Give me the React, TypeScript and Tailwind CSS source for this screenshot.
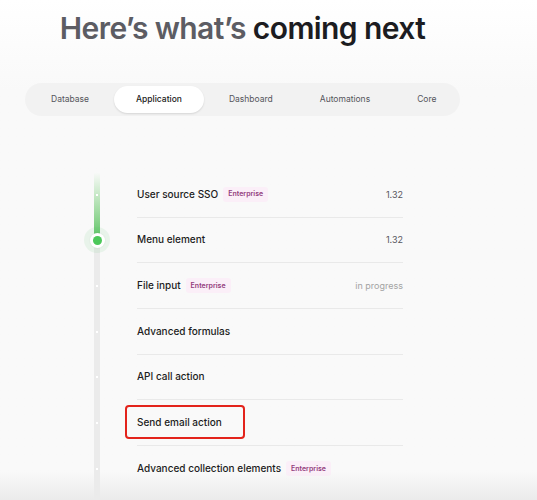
import React from "react";

type Item = {
  name: string;
  enterprise?: boolean;
  value?: string;
  muted?: boolean;
  highlight?: boolean;
};

const tabs = ["Database", "Application", "Dashboard", "Automations", "Core"];

const items: Item[] = [
  { name: "User source SSO", enterprise: true, value: "1.32" },
  { name: "Menu element", value: "1.32" },
  { name: "File input", enterprise: true, value: "in progress", muted: true },
  { name: "Advanced formulas" },
  { name: "API call action" },
  { name: "Send email action", highlight: true },
  { name: "Advanced collection elements", enterprise: true },
];

const Badge = () => (
  <span className="ml-[5px] rounded-[3px] bg-[#fbeff8] px-[5px] py-[3.5px] text-[7px] font-semibold leading-[8px] text-[#933d7d]">
    Enterprise
  </span>
);

export default function App() {
  return (
    <div
      className="relative h-[500px] w-[537px] overflow-hidden bg-gradient-to-b from-white to-[#f9f9f9] to-[90px]"
      style={{ fontFamily: "Inter, 'Noto Sans', sans-serif" }}
    >
      <div className="ml-[25px] w-[435px]">
        <h1 className="pt-[8px] text-center text-[30px] font-semibold leading-[40px] tracking-[-0.02em]">
          <span className="text-[#5c5c63]">Here’s what’s </span>
          <span className="text-[#1c1c21]">coming next</span>
        </h1>

        {/* tabs */}
        <div className="mt-[35px] flex h-[33px] items-center gap-[3px] rounded-full bg-[#f2f2f2] px-[4px]">
          {tabs.map((t) =>
            t === "Application" ? (
              <div
                key={t}
                className="flex h-[27px] items-center rounded-full bg-white px-[22px] text-[8.5px] font-medium text-[#1c1c21] shadow-[0_1px_2px_rgba(0,0,0,0.12)]"
              >
                {t}
              </div>
            ) : (
              <div key={t} className="flex h-[27px] items-center px-[22px] text-[8.5px] text-[#55555c]">
                {t}
              </div>
            )
          )}
        </div>
      </div>

      {/* timeline */}
      <div className="mt-[56px] flex pl-[94px]">
        <div className="relative w-[6px]">
          <div className="absolute left-0 top-0 h-[330px] w-[6px] bg-[#ebebeb]" />
          <div className="absolute left-0 top-0 h-[68px] w-[6px] bg-gradient-to-b from-[#fafafa] to-[#55c25f]" />
          {items.map((it, i) =>
            i === 1 ? (
              <div
                key={i}
                className="absolute left-[-10px] flex h-[26px] w-[26px] items-center justify-center rounded-full bg-[#5ac46a]/10"
                style={{ top: 22.8 + i * 45.67 - 13 }}
              >
                <div className="flex h-[15px] w-[15px] items-center justify-center rounded-full bg-white shadow-[0_0_2px_rgba(0,0,0,0.08)]">
                  <div className="h-[9px] w-[9px] rounded-full bg-[#4cc85a]" />
                </div>
              </div>
            ) : (
              <div
                key={i}
                className="absolute left-[2px] h-[2px] w-[2px] bg-white"
                style={{ top: 22.8 + i * 45.67 - 1 }}
              />
            )
          )}
        </div>

        <div className="ml-[37px] w-[266px]">
          {items.map((it) => (
            <div
              key={it.name}
              className="flex h-[45.67px] items-center justify-between border-b border-[#e9e9e9] last:border-b-0"
            >
              <div className="relative flex items-center">
                <span className="text-[10px] font-medium text-[#1c1c21]">{it.name}</span>
                {it.enterprise && <Badge />}
                {it.highlight && (
                  <div className="absolute left-[-12px] top-1/2 mt-[-18px] h-[34px] w-[120px] rounded-[4px] border-2 border-[#e3231b]" />
                )}
              </div>
              {it.value && (
                <span className={`text-[9px] ${it.muted ? "text-[#a3a3a3]" : "text-[#55555c]"}`}>{it.value}</span>
              )}
            </div>
          ))}
        </div>
      </div>

      {/* bottom fade */}
      <div className="pointer-events-none absolute bottom-0 left-0 h-[28px] w-full bg-gradient-to-b from-[#fafafa]/0 to-[#ebebeb]" />
    </div>
  );
}
